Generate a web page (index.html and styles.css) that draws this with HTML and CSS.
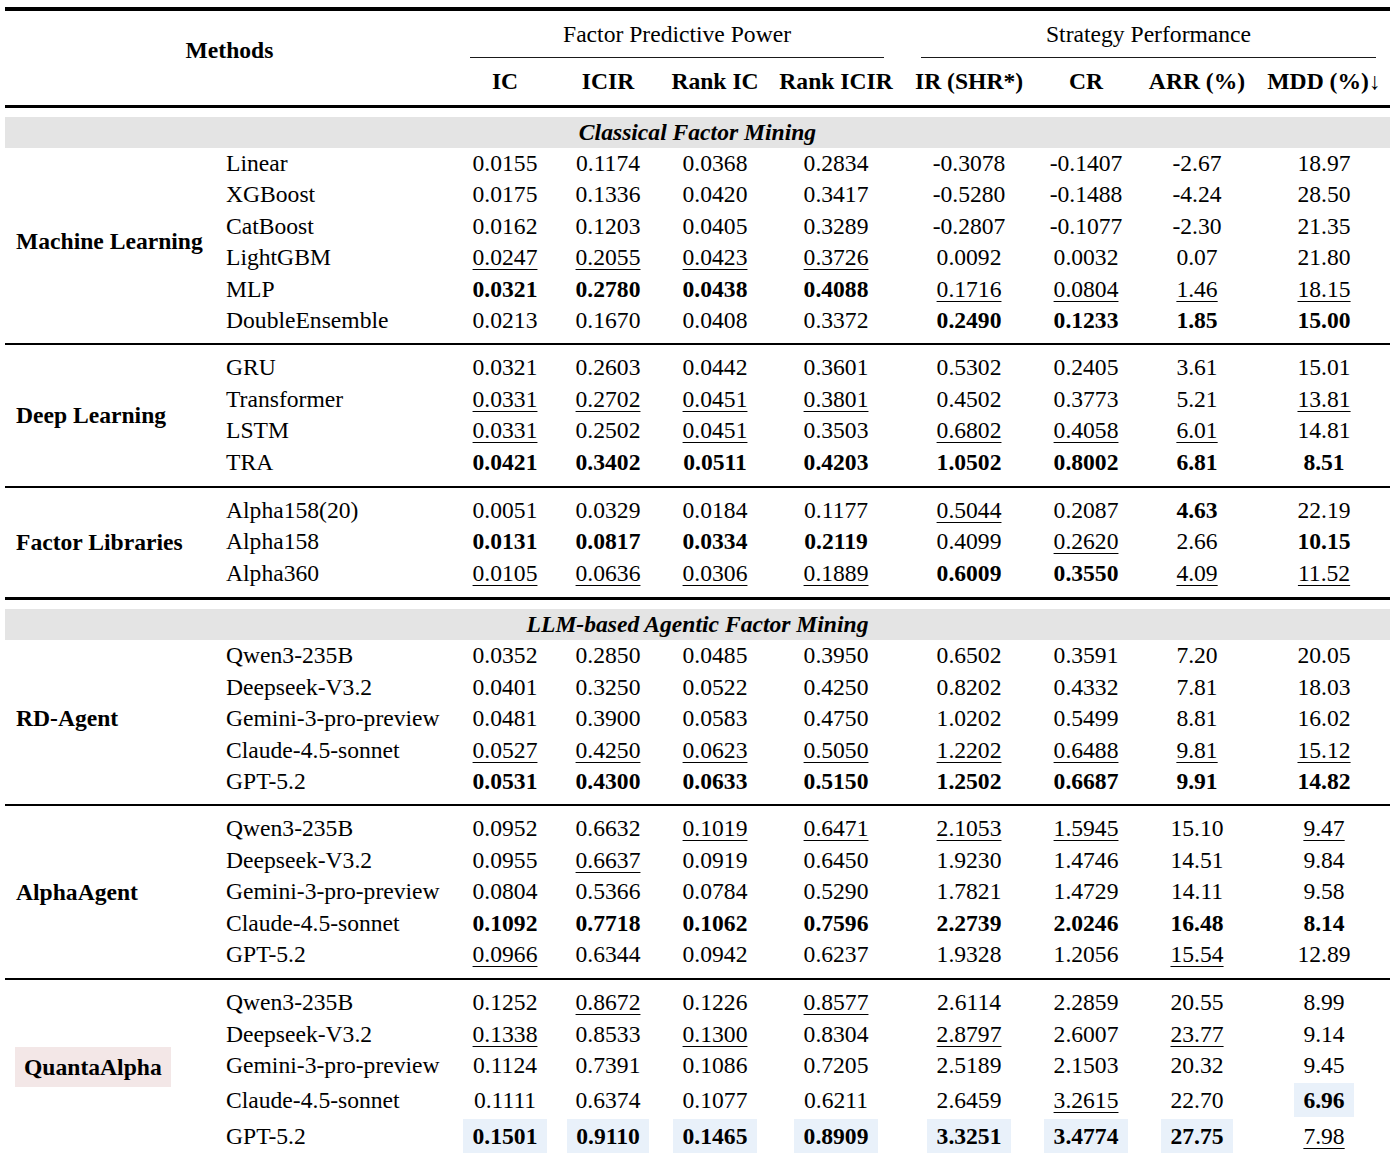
FILE: index.html
```html
<!DOCTYPE html>
<html lang="en">
<head>
<meta charset="utf-8">
<title>Factor mining results</title>
<link rel="stylesheet" href="styles.css">
</head>
<body>
<table class="results">
  <colgroup>
    <col class="c-lab"><col class="c-meth"><col class="c-ic"><col class="c-icir"><col class="c-ric"><col class="c-ricir"><col class="c-ir"><col class="c-cr"><col class="c-arr"><col class="c-mdd">
  </colgroup>
  <thead>
    <tr class="h1">
      <th class="methods" colspan="2" rowspan="2">Methods</th>
      <th colspan="4"><div class="grp grp-a">Factor Predictive Power</div></th>
      <th colspan="4"><div class="grp grp-b">Strategy Performance</div></th>
    </tr>
    <tr class="h2">
      <th>IC</th><th>ICIR</th><th>Rank IC</th><th>Rank ICIR</th>
      <th>IR (SHR*)</th><th>CR</th><th>ARR (%)</th><th>MDD (%)↓</th>
    </tr>
  </thead>
  <tbody>
    <tr><td class="sec" colspan="10"><div class="band">Classical Factor Mining</div></td></tr>
  </tbody>
  <tbody>
    <tr>
      <td class="lab lift" rowspan="6">Machine Learning</td>
      <td class="m">Linear</td><td>0.0155</td><td>0.1174</td><td>0.0368</td><td>0.2834</td><td>-0.3078</td><td>-0.1407</td><td>-2.67</td><td>18.97</td>
    </tr>
    <tr><td class="m">XGBoost</td><td>0.0175</td><td>0.1336</td><td>0.0420</td><td>0.3417</td><td>-0.5280</td><td>-0.1488</td><td>-4.24</td><td>28.50</td></tr>
    <tr><td class="m">CatBoost</td><td>0.0162</td><td>0.1203</td><td>0.0405</td><td>0.3289</td><td>-0.2807</td><td>-0.1077</td><td>-2.30</td><td>21.35</td></tr>
    <tr><td class="m">LightGBM</td><td><span class="u">0.0247</span></td><td><span class="u">0.2055</span></td><td><span class="u">0.0423</span></td><td><span class="u">0.3726</span></td><td>0.0092</td><td>0.0032</td><td>0.07</td><td>21.80</td></tr>
    <tr><td class="m">MLP</td><td class="b">0.0321</td><td class="b">0.2780</td><td class="b">0.0438</td><td class="b">0.4088</td><td><span class="u">0.1716</span></td><td><span class="u">0.0804</span></td><td><span class="u">1.46</span></td><td><span class="u">18.15</span></td></tr>
    <tr class="last"><td class="m">DoubleEnsemble</td><td>0.0213</td><td>0.1670</td><td>0.0408</td><td>0.3372</td><td class="b">0.2490</td><td class="b">0.1233</td><td class="b">1.85</td><td class="b">15.00</td></tr>
  </tbody>
  <tbody>
    <tr class="first ruled">
      <td class="lab" rowspan="4">Deep Learning</td>
      <td class="m">GRU</td><td>0.0321</td><td>0.2603</td><td>0.0442</td><td>0.3601</td><td>0.5302</td><td>0.2405</td><td>3.61</td><td>15.01</td>
    </tr>
    <tr><td class="m">Transformer</td><td><span class="u">0.0331</span></td><td><span class="u">0.2702</span></td><td><span class="u">0.0451</span></td><td><span class="u">0.3801</span></td><td>0.4502</td><td>0.3773</td><td>5.21</td><td><span class="u">13.81</span></td></tr>
    <tr><td class="m">LSTM</td><td><span class="u">0.0331</span></td><td>0.2502</td><td><span class="u">0.0451</span></td><td>0.3503</td><td><span class="u">0.6802</span></td><td><span class="u">0.4058</span></td><td><span class="u">6.01</span></td><td>14.81</td></tr>
    <tr class="last wide"><td class="m">TRA</td><td class="b">0.0421</td><td class="b">0.3402</td><td class="b">0.0511</td><td class="b">0.4203</td><td class="b">1.0502</td><td class="b">0.8002</td><td class="b">6.81</td><td class="b">8.51</td></tr>
  </tbody>
  <tbody>
    <tr class="first ruled">
      <td class="lab" rowspan="3">Factor Libraries</td>
      <td class="m">Alpha158(20)</td><td>0.0051</td><td>0.0329</td><td>0.0184</td><td>0.1177</td><td><span class="u">0.5044</span></td><td>0.2087</td><td class="b">4.63</td><td>22.19</td>
    </tr>
    <tr><td class="m">Alpha158</td><td class="b">0.0131</td><td class="b">0.0817</td><td class="b">0.0334</td><td class="b">0.2119</td><td>0.4099</td><td><span class="u">0.2620</span></td><td>2.66</td><td class="b">10.15</td></tr>
    <tr class="last wide"><td class="m">Alpha360</td><td><span class="u">0.0105</span></td><td><span class="u">0.0636</span></td><td><span class="u">0.0306</span></td><td><span class="u">0.1889</span></td><td class="b">0.6009</td><td class="b">0.3550</td><td><span class="u">4.09</span></td><td><span class="u">11.52</span></td></tr>
  </tbody>
  <tbody>
    <tr><td class="sec heavy" colspan="10"><div class="band">LLM-based Agentic Factor Mining</div></td></tr>
  </tbody>
  <tbody>
    <tr>
      <td class="lab lift" rowspan="5">RD-Agent</td>
      <td class="m">Qwen3-235B</td><td>0.0352</td><td>0.2850</td><td>0.0485</td><td>0.3950</td><td>0.6502</td><td>0.3591</td><td>7.20</td><td>20.05</td>
    </tr>
    <tr><td class="m">Deepseek-V3.2</td><td>0.0401</td><td>0.3250</td><td>0.0522</td><td>0.4250</td><td>0.8202</td><td>0.4332</td><td>7.81</td><td>18.03</td></tr>
    <tr><td class="m">Gemini-3-pro-preview</td><td>0.0481</td><td>0.3900</td><td>0.0583</td><td>0.4750</td><td>1.0202</td><td>0.5499</td><td>8.81</td><td>16.02</td></tr>
    <tr><td class="m">Claude-4.5-sonnet</td><td><span class="u">0.0527</span></td><td><span class="u">0.4250</span></td><td><span class="u">0.0623</span></td><td><span class="u">0.5050</span></td><td><span class="u">1.2202</span></td><td><span class="u">0.6488</span></td><td><span class="u">9.81</span></td><td><span class="u">15.12</span></td></tr>
    <tr class="last"><td class="m">GPT-5.2</td><td class="b">0.0531</td><td class="b">0.4300</td><td class="b">0.0633</td><td class="b">0.5150</td><td class="b">1.2502</td><td class="b">0.6687</td><td class="b">9.91</td><td class="b">14.82</td></tr>
  </tbody>
  <tbody>
    <tr class="first ruled">
      <td class="lab" rowspan="5">AlphaAgent</td>
      <td class="m">Qwen3-235B</td><td>0.0952</td><td>0.6632</td><td><span class="u">0.1019</span></td><td><span class="u">0.6471</span></td><td><span class="u">2.1053</span></td><td><span class="u">1.5945</span></td><td>15.10</td><td><span class="u">9.47</span></td>
    </tr>
    <tr><td class="m">Deepseek-V3.2</td><td>0.0955</td><td><span class="u">0.6637</span></td><td>0.0919</td><td>0.6450</td><td>1.9230</td><td>1.4746</td><td>14.51</td><td>9.84</td></tr>
    <tr><td class="m">Gemini-3-pro-preview</td><td>0.0804</td><td>0.5366</td><td>0.0784</td><td>0.5290</td><td>1.7821</td><td>1.4729</td><td>14.11</td><td>9.58</td></tr>
    <tr><td class="m">Claude-4.5-sonnet</td><td class="b">0.1092</td><td class="b">0.7718</td><td class="b">0.1062</td><td class="b">0.7596</td><td class="b">2.2739</td><td class="b">2.0246</td><td class="b">16.48</td><td class="b">8.14</td></tr>
    <tr class="last wide"><td class="m">GPT-5.2</td><td><span class="u">0.0966</span></td><td>0.6344</td><td>0.0942</td><td>0.6237</td><td>1.9328</td><td>1.2056</td><td><span class="u">15.54</span></td><td>12.89</td></tr>
  </tbody>
  <tbody>
    <tr class="first ruled">
      <td class="lab" rowspan="5"><span class="ours">QuantaAlpha</span></td>
      <td class="m">Qwen3-235B</td><td>0.1252</td><td><span class="u">0.8672</span></td><td>0.1226</td><td><span class="u">0.8577</span></td><td>2.6114</td><td>2.2859</td><td>20.55</td><td>8.99</td>
    </tr>
    <tr><td class="m">Deepseek-V3.2</td><td><span class="u">0.1338</span></td><td>0.8533</td><td><span class="u">0.1300</span></td><td>0.8304</td><td><span class="u">2.8797</span></td><td>2.6007</td><td><span class="u">23.77</span></td><td>9.14</td></tr>
    <tr><td class="m">Gemini-3-pro-preview</td><td>0.1124</td><td>0.7391</td><td>0.1086</td><td>0.7205</td><td>2.5189</td><td>2.1503</td><td>20.32</td><td>9.45</td></tr>
    <tr class="tall"><td class="m">Claude-4.5-sonnet</td><td>0.1111</td><td>0.6374</td><td>0.1077</td><td>0.6211</td><td>2.6459</td><td><span class="u">3.2615</span></td><td>22.70</td><td><span class="best">6.96</span></td></tr>
    <tr class="tall"><td class="m">GPT-5.2</td><td><span class="best">0.1501</span></td><td><span class="best">0.9110</span></td><td><span class="best">0.1465</span></td><td><span class="best">0.8909</span></td><td><span class="best">3.3251</span></td><td><span class="best">3.4774</span></td><td><span class="best">27.75</span></td><td><span class="u">7.98</span></td></tr>
  </tbody>
</table>
</body>
</html>
```

FILE: styles.css
```css
html, body {
  margin: 0;
  padding: 0;
  background: #ffffff;
}

body {
  font-family: "Liberation Serif", "Times New Roman", serif;
  font-size: 23.6px;
  color: #000000;
  overflow: hidden;
}

.results {
  border-collapse: separate;
  border-spacing: 0;
  table-layout: fixed;
  width: 1385px;
  margin: 7px 0 0 5px;
}

.c-lab { width: 210px; }
.c-meth { width: 239px; }
.c-ic { width: 102px; }
.c-icir { width: 104px; }
.c-ric { width: 110px; }
.c-ricir { width: 132px; }
.c-ir { width: 134px; }
.c-cr { width: 100px; }
.c-arr { width: 122px; }
.c-mdd { width: 132px; }

.results th,
.results td {
  padding: 0;
  text-align: center;
  vertical-align: middle;
  white-space: nowrap;
  line-height: 31.4px;
  font-weight: normal;
}

/* header */
.results .h1 th {
  border-top: 4px solid #000;
  line-height: 46px;
}

.results .h1 th.methods {
  font-weight: bold;
  line-height: 31.4px;
  padding-bottom: 14px;
  border-bottom: 3px solid #000;
}

.grp {
  border-bottom: 1px solid #1a1a1a;
}

.grp-a { margin: 0 18px 0 16px; }
.grp-b { margin: 0 14px 0 19px; }

.results .h2 th {
  font-weight: bold;
  line-height: 47px;
  border-bottom: 3px solid #000;
}

/* section bands */
.results td.sec {
  padding-top: 9px;
}

.results td.sec.heavy {
  border-top: 3px solid #000;
}

.band {
  background: #e4e4e4;
  line-height: 31px;
  font-weight: bold;
  font-style: italic;
}

/* group spacing and rules */
.results tr.first td { padding-top: 7px; }
.results tr.last td { padding-bottom: 7px; }
.results tr.last.wide td { padding-bottom: 8px; }
.results tr.ruled td { border-top: 2px solid #000; }

.results tr > td.lab {
  padding: 0 0 0 11px;
  text-align: left;
  font-weight: bold;
}

.results tr > td.lab.lift {
  padding-bottom: 8px;
}

.results td.m {
  text-align: left;
  padding-left: 11px;
}

.results td.b { font-weight: bold; }

.u {
  text-decoration: underline;
  text-decoration-thickness: 1px;
  text-underline-offset: 4px;
}

.results tr.tall td {
  line-height: 34px;
  padding: 1px 0;
}

.results tr.tall td.m {
  padding-left: 11px;
}

.best {
  display: inline-block;
  vertical-align: top;
  line-height: 34px;
  padding: 0 9.5px;
  background: #e9f1fa;
  font-weight: bold;
}

.ours {
  display: inline-block;
  vertical-align: middle;
  line-height: 40px;
  padding: 0 9px;
  margin-left: -1px;
  background: #f3e7e7;
}
```
